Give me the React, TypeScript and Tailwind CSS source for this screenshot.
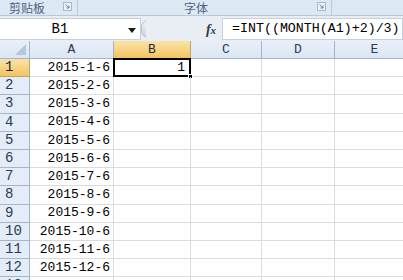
const cols = [
  { key: 'A', w: 84 },
  { key: 'B', w: 77 },
  { key: 'C', w: 71 },
  { key: 'D', w: 73 },
  { key: 'E', w: 80 },
]

const dates = Array.from({ length: 13 }, (_, i) => (i < 12 ? `2015-${i + 1}-6` : ''))

const mono = { fontFamily: '"Liberation Mono", "Noto Sans CJK SC", monospace' }

function Launcher() {
  return (
    <svg width="9" height="9" viewBox="0 0 9 9" className="shrink-0">
      <rect x="0.5" y="0.5" width="8" height="8" fill="#eef3fa" stroke="#a9b8cc" />
      <path d="M2.5 2.5 L6 6 M6 3.5 V6 H3.5" stroke="#6b7f99" strokeWidth="1" fill="none" />
    </svg>
  )
}

export default function App() {
  return (
    <div className="w-[403px] h-[280px] overflow-hidden bg-white" style={mono}>
      {/* ribbon group labels */}
      <div className="flex h-[16px] bg-[#dde8f5] border-b border-[#b9c9dd] text-[12px] leading-[15px] text-[#4f627c] font-['Noto_Sans_CJK_SC',sans-serif]">
        <div className="w-[78px] flex items-start border-r border-[#b9c9dd]">
          <span className="ml-[9px]">剪贴板</span>
          <span className="ml-auto mr-[5px] mt-[2px] leading-none">
            <Launcher />
          </span>
        </div>
        <div className="w-[254px] flex items-start border-r border-[#b9c9dd]">
          <span className="ml-[106px]">字体</span>
          <span className="ml-auto mr-[5px] mt-[2px] leading-none">
            <Launcher />
          </span>
        </div>
        <div className="flex-1" />
      </div>

      {/* formula bar */}
      <div className="h-[25px] bg-[#e9eef5] pt-[2px] pb-[1px] flex">
        <div className="w-[141px] h-[22px] bg-white border-y border-r border-[#c6cfdb] flex items-center relative">
          <span className="flex-1 text-center text-[14px] text-black pr-[20px]">B1</span>
          <svg width="8" height="5" viewBox="0 0 8 5" className="absolute right-[4px] top-[9px]">
            <path d="M0 0 H8 L4 5 Z" fill="#1a1a1a" />
          </svg>
        </div>
        <div className="w-[5px] h-[22px] bg-[#e9eef5] flex items-center">
          <div className="w-[14px] h-[18px] rounded-full bg-gradient-to-b from-[#f3f5f8] to-[#c9d1dc] border border-[#b9c3d0] shrink-0" />
        </div>
        <div className="flex-1 h-[22px] flex items-center bg-[#e9eef5]">
          <div className="flex-1" />
          <span className="w-[22px] text-center text-[14px] italic font-bold text-[#2a3a52] font-['Liberation_Serif',serif]">
            f<span className="text-[11px]">x</span>
          </span>
          <div className="w-[181px] h-[22px] bg-white border border-[#c6cfdb] flex items-center pl-[9px] text-[13.3px] text-black whitespace-nowrap overflow-hidden">
            =INT((MONTH(A1)+2)/3)
          </div>
        </div>
      </div>

      {/* column headers */}
      <div className="flex h-[18px] border-b border-[#9eb6ce]">
        <div className="w-[30px] shrink-0 bg-gradient-to-b from-[#e9eff8] to-[#dce6f4] border-r border-[#9eb6ce] relative">
          <svg width="11" height="11" viewBox="0 0 11 11" className="absolute right-[3px] bottom-[3px]">
            <path d="M11 0 V11 H0 Z" fill="#b7c7da" />
          </svg>
        </div>
        {cols.map((c) => (
          <div
            key={c.key}
            style={{ width: c.w }}
            className={`shrink-0 flex items-center justify-center text-[13px] border-r ${
              c.key === 'B'
                ? 'bg-gradient-to-b from-[#f9e3a8] to-[#f2c461] border-[#c4a35a] text-[#1c2a40]'
                : 'bg-gradient-to-b from-[#e9eff8] to-[#dce6f4] border-[#9eb6ce] text-[#2a3b55]'
            }`}
          >
            {c.key}
          </div>
        ))}
      </div>

      {/* rows */}
      {dates.map((d, i) => (
        <div key={i} className="flex h-[18.2px] border-b border-[#dadcdd]">
          <div
            className={`w-[30px] shrink-0 flex items-center pl-[5px] text-[14px] border-r border-b -mb-px ${
              i === 0
                ? 'bg-gradient-to-b from-[#f9e3a8] to-[#f2c461] border-[#c4a35a] text-[#1c2a40]'
                : 'bg-[#e4ecf7] border-[#9eb6ce] text-[#2a3b55]'
            }`}
          >
            {i + 1}
          </div>
          {cols.map((c) => (
            <div
              key={c.key}
              style={{ width: c.w }}
              className="shrink-0 border-r border-[#dadcdd] relative flex items-center justify-end pr-[3px] text-[13px] text-black"
            >
              {c.key === 'A' ? d : ''}
              {c.key === 'B' && i === 0 && (
                <>
                  <span className="mr-[2px]">1</span>
                  <div className="absolute -left-px -top-px -right-px -bottom-px border-2 border-black pointer-events-none" />
                  <div className="absolute -right-[3px] -bottom-[3px] w-[5px] h-[5px] bg-black border border-white" />
                </>
              )}
            </div>
          ))}
        </div>
      ))}
    </div>
  )
}
